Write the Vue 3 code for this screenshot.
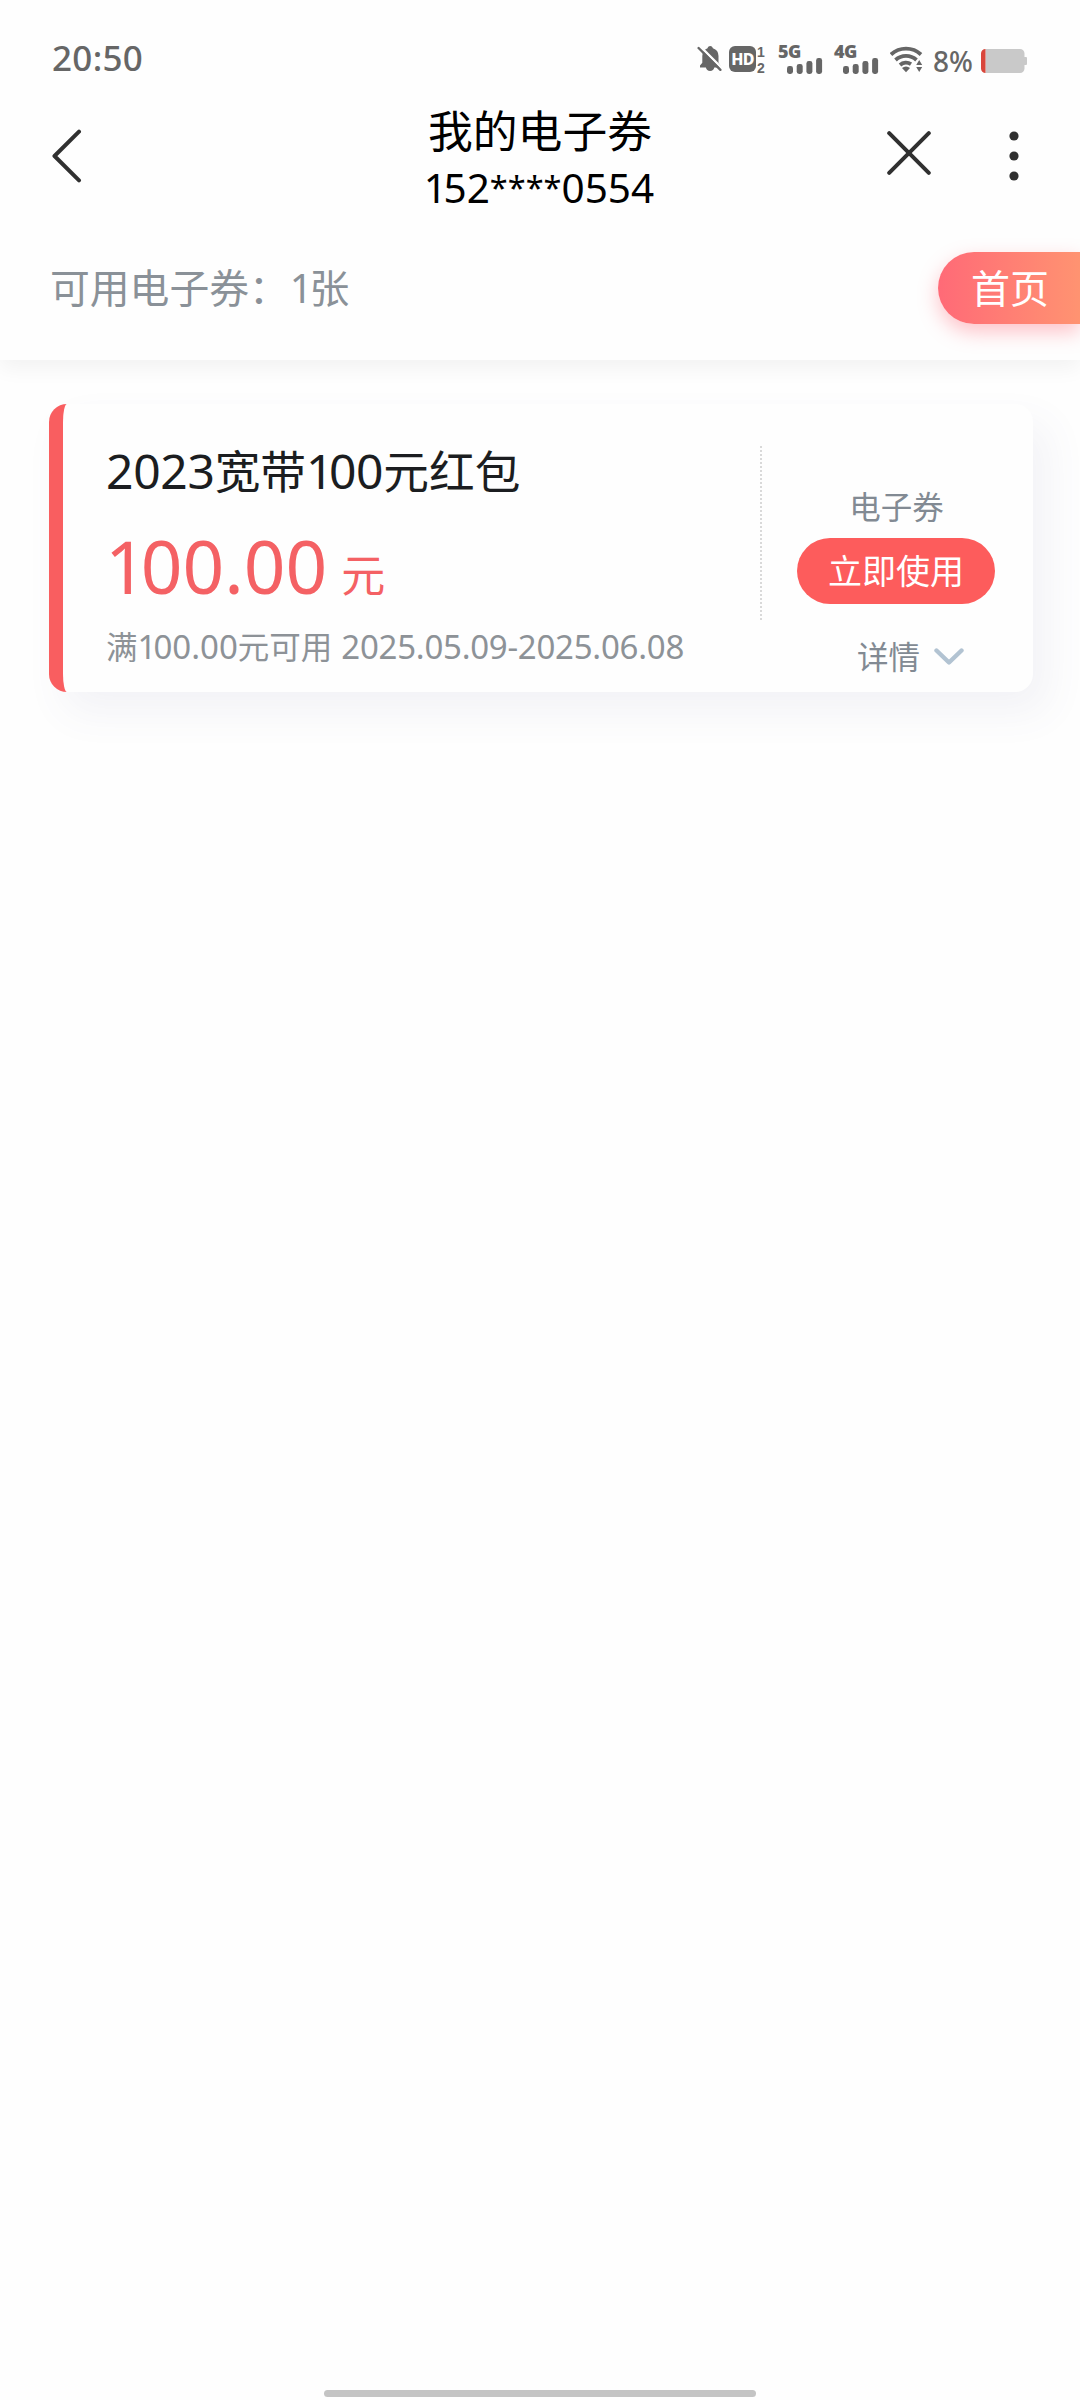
<script setup>
const coupon = {
  unit: '元',
  period: '2025.05.09-2025.06.08'
}
const bars = [
  { x: 0, h: 8 },
  { x: 9.7, h: 10 },
  { x: 19.4, h: 13 },
  { x: 29.1, h: 16 }
]
</script>

<template>
  <div class="page">
    <header class="top">
      <div class="status">
        <span class="time">20:50</span>
        <div class="indicators">
          <svg class="bell" width="26" height="28" viewBox="0 0 26 28">
            <path d="M3 22.500v-2l2.300-2.800V11a8.200 8.200 0 0 1 5.200-7.700C11 1.800 12 1 13.200 1s2.200.8 2.700 2.300A8.200 8.200 0 0 1 21.500 11v6.700l2 2.800v2h-6.200a4.300 4.300 0 0 1-8.400 0z" fill="#666" />
            <path d="M3.200 1.400 27 25.200" stroke="#fefefe" stroke-width="2.400" />
            <path d="M1.600 3 23.400 24.800" stroke="#666" stroke-width="2.400" stroke-linecap="round" />
          </svg>
          <div class="hd">
            <span class="hd-box">HD</span>
            <span class="sims"><i>1</i><i>2</i></span>
          </div>
          <div v-for="net in ['5G', '4G']" :key="net" class="signal">
            <span class="net">{{ net }}</span>
            <svg class="bars" width="36" height="16" viewBox="0 0 36 16">
              <rect v-for="b in bars" :key="b.x" :x="b.x" :y="16 - b.h" width="6" :height="b.h" rx="2.400" fill="#666" />
            </svg>
          </div>
          <svg class="wifi" width="33" height="27" viewBox="0 0 33 27">
            <g fill="none" stroke="#666" stroke-width="3.800">
              <path d="M1 8.500a22 22 0 0 1 30 0" />
              <path d="M5.500 14a15.500 15.500 0 0 1 21 0" />
              <path d="M10 19a9 9 0 0 1 11 -.8" />
            </g>
            <path d="M16 26.300l-4-4.300a6 6 0 0 1 8 0z" fill="#666" />
            <path d="M29.200 14l3 5h-6zM29.200 26l3-5h-6z" fill="#666" />
          </svg>
          <span class="percent">8%</span>
          <svg class="battery" width="46" height="24" viewBox="0 0 46 24">
            <path d="M4.500 0H39a4.500 4.500 0 0 1 4.500 4.500V8H45a1 1 0 0 1 1 1v6a1 1 0 0 1-1 1h-1.500v3.500A4.500 4.500 0 0 1 39 24H4.500z" fill="#c9c9c9" />
            <path d="M4.500 0v24A4.500 4.500 0 0 1 0 19.500v-15A4.500 4.500 0 0 1 4.500 0z" fill="#d9463b" />
          </svg>
        </div>
      </div>

      <nav class="nav">
        <svg class="back" width="30" height="54" viewBox="0 0 30 54" fill="none" stroke="#303030" stroke-width="4" stroke-linecap="round" stroke-linejoin="round">
          <path d="M27 2.700 2.500 27 27 51.300" />
        </svg>
        <div class="heading">
          <h1>我的电子券</h1>
          <p><span class="one">1</span>52<span class="mask">****</span>0554</p>
        </div>
        <div class="actions">
          <svg width="44" height="44" viewBox="0 0 44 44" fill="none" stroke="#303030" stroke-width="4" stroke-linecap="round">
            <path d="M2.200 2.200 41.800 41.800M41.800 2.200 2.200 41.800" />
          </svg>
          <svg class="more" width="10" height="50" viewBox="0 0 10 50" fill="#303030">
            <circle cx="5" cy="5" r="4.600" /><circle cx="5" cy="25" r="4.600" /><circle cx="5" cy="45" r="4.600" />
          </svg>
        </div>
      </nav>

      <div class="summary">
        <span class="count">可用电子券：<span class="one">1</span>张</span>
        <a class="home">首页</a>
      </div>
    </header>

    <main class="list">
      <article class="card">
        <div class="info">
          <h2><span class="num">2023</span>宽带<span class="num"><span class="one">1</span>00</span>元红包</h2>
          <div class="amount"><span class="one">1</span>00.00<span class="unit">{{ coupon.unit }}</span></div>
          <p class="desc">满<span class="num"><span class="one">1</span>00.00</span>元可用<span class="num date">{{ coupon.period }}</span></p>
        </div>
        <div class="side">
          <span class="kind">电子券</span>
          <button class="use">立即使用</button>
          <span class="detail">详情
            <svg width="30" height="18" viewBox="0 0 30 18" fill="none" stroke="#b2c3d2" stroke-width="4.400" stroke-linecap="round" stroke-linejoin="round">
              <path d="M2.500 2.500 15 14.500 27.500 2.500" />
            </svg>
          </span>
        </div>
      </article>
    </main>

    <div class="gesture"></div>
  </div>
</template>

<style>
body {
  margin: 0;
  background: #fefefe;
}
</style>

<style scoped>
.page {
  display: flex;
  flex-direction: column;
  width: 1080px;
  height: 2400px;
  overflow: hidden;
  background: #fefefe;
  font-family: "Noto Sans", "Noto Sans CJK SC", sans-serif;
}
h1, h2, p {
  margin: 0;
  font-weight: 400;
}
svg {
  display: block;
  flex: none;
}
.top {
  height: 360px;
  background: #fefefe;
  box-shadow: 0 8px 20px rgba(0, 0, 0, 0.05);
}
.status {
  display: flex;
  justify-content: space-between;
  height: 96px;
  padding: 0 53px 0 52px;
  color: #666;
}
.time {
  margin-top: 33px;
  font-size: 35px;
  line-height: 50px;
  font-weight: 500;
  letter-spacing: 0.3px;
}
.indicators {
  display: flex;
  align-items: flex-start;
}
.bell { margin-top: 45px; }
.hd {
  display: flex;
  gap: 1px;
  width: 39px;
  margin: 46px 0 0 6px;
}
.hd-box {
  width: 27px;
  height: 26px;
  border-radius: 6px;
  background: #666;
  color: #fff;
  font-size: 16px;
  font-weight: 800;
  line-height: 26px;
  letter-spacing: -0.8px;
  text-align: center;
}
.sims {
  display: flex;
  flex-direction: column;
  margin-top: -2px;
  font-family: "Liberation Sans", sans-serif;
  font-size: 14px;
  font-weight: 700;
  line-height: 16px;
}
.sims i {
  height: 16px;
  font-style: normal;
}
.signal {
  display: flex;
  flex-direction: column;
  width: 46px;
  height: 32px;
  margin: 42px 0 0 10px;
}
.net {
  height: 16px;
  font-family: "Open Sans", sans-serif;
  font-size: 18px;
  font-weight: 800;
  line-height: 18px;
  letter-spacing: -0.6px;
}
.bars { margin-left: 9px; }
.wifi { margin: 46px 0 0 10px; }
.percent {
  width: 48px;
  margin: 41px 0 0 10px;
  font-size: 28px;
  line-height: 40px;
  font-weight: 500;
}
.battery { margin-top: 49px; }
.nav {
  display: grid;
  grid-template-columns: 1fr 360px 1fr;
  height: 120px;
}
.back { margin: 33px 0 0 52px; }
.heading {
  text-align: center;
  color: #000;
}
h1 {
  height: 68px;
  font-size: 44.8px;
  line-height: 70px;
}
.heading p {
  margin-left: -2px;
  font-size: 40.5px;
  line-height: 48px;
}
.heading .one { letter-spacing: -3.5px; }
.mask {
  font-size: 32.5px;
  line-height: 1;
  vertical-align: 3px;
}
.actions {
  display: flex;
  justify-content: flex-end;
  align-items: flex-start;
  padding: 35px 61px 0 0;
}
.more { margin-left: 78px; }
.summary {
  display: flex;
  justify-content: space-between;
  padding: 36px 0 0 50px;
}
.count {
  color: #8a9198;
  font-size: 39.8px;
  line-height: 72px;
}
.count .one { margin-left: 1px; letter-spacing: -3px; }
.home {
  box-sizing: border-box;
  width: 142px;
  height: 72px;
  padding-left: 33px;
  border-radius: 36px 0 0 36px;
  background: linear-gradient(90deg, #ff6a77, #ff9371);
  box-shadow: 0 8px 20px rgba(255, 106, 119, 0.4);
  color: #fff;
  font-size: 39px;
  line-height: 72px;
}
.list {
  flex: 1;
  padding: 44px 47px 0 49px;
}
.card {
  box-sizing: border-box;
  display: flex;
  height: 288px;
  border-left: 14px solid #f95e60;
  border-radius: 18px;
  background: #fefefe;
  box-shadow: 15px 20px 40px rgba(90, 90, 140, 0.07);
}
.info {
  box-sizing: border-box;
  flex: none;
  width: 693px;
  padding-left: 43px;
  white-space: nowrap;
}
h2 {
  margin-top: 34px;
  height: 66px;
  color: #1b1d20;
  font-size: 45.7px;
  line-height: 66px;
}
h2 .num { font-size: 48px; line-height: 1; letter-spacing: -0.3px; }
h2 .one { letter-spacing: -4.5px; }
.amount {
  height: 100px;
  margin-top: 12px;
  color: #f46164;
  font-size: 73px;
  line-height: 100px;
}
.amount .one { margin-left: -1px; letter-spacing: -6px; }
.unit {
  margin-left: 14px;
  font-size: 44px;
  line-height: 1;
  vertical-align: 2px;
}
.desc {
  margin-top: 7px;
  color: #8d9297;
  font-size: 31.5px;
  line-height: 48px;
}
.desc .num { font-size: 33px; line-height: 1; }
.desc .one { letter-spacing: -3px; }
.desc .date { margin-left: 9px; letter-spacing: -0.25px; }
.side {
  box-sizing: border-box;
  display: flex;
  flex-direction: column;
  align-items: center;
  flex: 1;
  height: 176px;
  margin-top: 42px;
  padding-left: 3px;
  background: repeating-linear-gradient(180deg, #d9d9d9 0 2px, transparent 2px 4px) 4px 0 / 2px 176px no-repeat;
}
.kind {
  margin: 37px 0 0 1px;
  color: #828a93;
  font-size: 31.5px;
  line-height: 48px;
}
.use {
  flex: none;
  width: 198px;
  height: 66px;
  margin-top: 7px;
  padding: 0;
  border: 0;
  border-radius: 33px;
  background: #fd5c5c;
  color: #fff;
  font-family: inherit;
  font-size: 34px;
  line-height: 66px;
}
.detail {
  display: flex;
  align-items: center;
  gap: 14px;
  margin: 29px 0 0 29px;
  color: #828a93;
  font-size: 31.5px;
  line-height: 48px;
}
.gesture {
  width: 432px;
  height: 7px;
  margin: 0 auto 3px;
  border-radius: 4px;
  background: #c4c4c4;
}
</style>
